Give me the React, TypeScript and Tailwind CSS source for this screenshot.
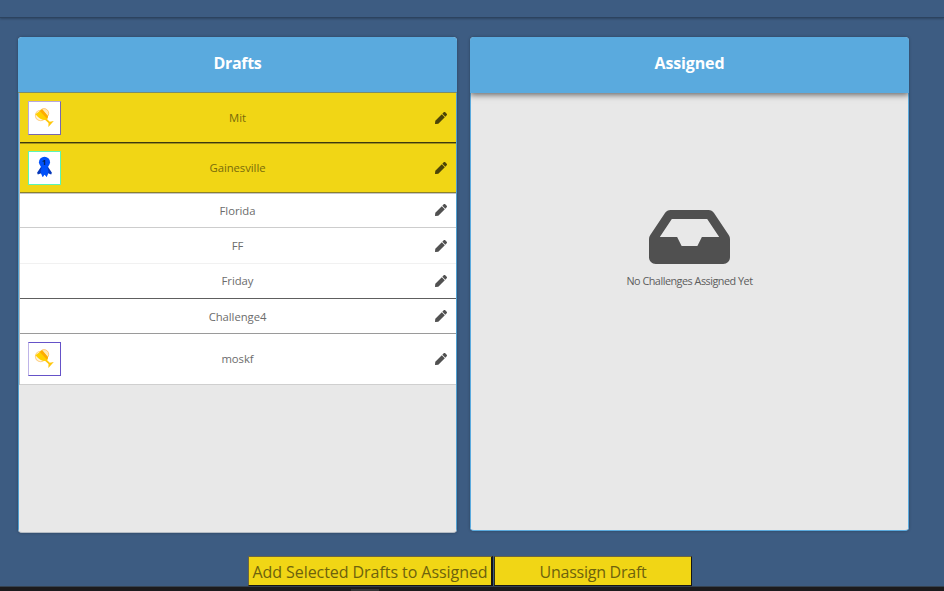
import { FaInbox, FaPen } from "react-icons/fa";

function Goblet() {
  return (
    <svg viewBox="0 0 33 33" className="h-full w-full">
      <circle cx="12.4" cy="13.8" r="5.6" fill="#fff6e0" stroke="#ffd28a" strokeWidth="1.1" />
      <circle cx="16" cy="11.5" r="5" fill="#ffe9b8" stroke="#ffbf66" strokeWidth="0.9" />
      <path d="M6.8 12.4 14 7.2 20.3 14.6Q20 18.4 17.3 18.7 12 18.6 6.8 12.4Z" fill="#ffd000" />
      <path d="M11.5 9 14 7.2 20.3 14.6 19.2 17.2Z" fill="#ffab00" />
      <path d="M17 18.3 18.6 17 22.1 20.4 26.4 19.6 20.6 26.2 20.8 21.9Z" fill="#ffc60a" />
    </svg>
  );
}

function Ribbon() {
  return (
    <svg viewBox="0 0 33 33" className="h-full w-full">
      <path d="M13 15 8.6 21.6 9.4 23.4 13 22 15 26 16.6 20 18.5 26 20.2 22 23.6 23.4 24.4 21.6 20 15Z" fill="#0638ba" />
      <path d="M13.5 15H19.5L20.8 20.5 19 26 16.6 23.6 14.2 26 12.4 20.5Z" fill="#0050fa" />
      <circle cx="16.5" cy="10.4" r="5.9" fill="#0050fa" />
      <text x="16.3" y="13.4" textAnchor="middle" className="fill-[#051b50] font-['Open_Sans',sans-serif] text-[8px] font-bold">1</text>
    </svg>
  );
}

type Draft = { name: string; row: string; pen: string; badge?: "goblet" | "ribbon"; frame?: string };

const drafts: Draft[] = [
  { name: "Mit", row: "h-[50px] bg-[#f1d615] border-[#3d390d] text-[#786b0b]", pen: "text-[#4c4408]", badge: "goblet", frame: "border-[#b7a8df] border-b-[#7868ae] border-r-[#7868ae]" },
  { name: "Gainesville", row: "h-[50px] bg-[#f1d615] border-[#8c812b] text-[#786b0b] shadow-[inset_0_1px_0_#a3931a]", pen: "text-[#4c4408]", badge: "ribbon", frame: "border-[#5cf5b8]" },
  { name: "Florida", row: "h-[35px] bg-white border-[#cdcdcd] text-[#6c6c6c] shadow-[inset_0_1px_0_#c5c5cc]", pen: "text-[#515151]" },
  { name: "FF", row: "h-[36px] bg-white border-[#f1f1f1] text-[#6c6c6c]", pen: "text-[#515151]" },
  { name: "Friday", row: "h-[35px] bg-white border-[#5e5e5e] pb-px text-[#6c6c6c]", pen: "text-[#515151]" },
  { name: "Challenge4", row: "h-[35px] bg-white border-[#9a9a9a] text-[#6c6c6c]", pen: "text-[#515151]" },
  { name: "moskf", row: "h-[51px] bg-white border-[#cfcfcf] pb-px text-[#6c6c6c]", pen: "text-[#515151]", badge: "goblet", frame: "border-[#6552c8] border-l-[#beb4e8]" },
];

function DraftRow({ draft }: { draft: Draft }) {
  return (
    <li className={`grid grid-cols-[33px_1fr_33px] items-center border-b pl-[8px] pr-[9px] ${draft.row}`}>
      <div>
        {draft.badge && (
          <div className={`h-[34px] w-[33px] border bg-white ${draft.frame}`}>
            {draft.badge === "goblet" ? <Goblet /> : <Ribbon />}
          </div>
        )}
      </div>
      <span className="pt-px text-center text-[11.3px] leading-4 tracking-[-0.05px]">{draft.name}</span>
      <FaPen className={`h-3 w-3 justify-self-end ${draft.pen}`} />
    </li>
  );
}

export default function App() {
  return (
    <div className="flex h-[591px] w-[944px] flex-col overflow-hidden bg-[#3d5c82] font-['Open_Sans','Noto_Sans',sans-serif]">
      <header className="h-[18px] shrink-0 border-b border-[#2c435f] shadow-[0_1px_2px_rgba(0,0,0,0.25)]" />
      <main className="flex h-[515px] shrink-0 gap-[13px] pl-[18px] pt-[19px]">
        <section className="h-[496px] w-[439px] overflow-hidden rounded-[4px] border-b border-[#b5bcc4] bg-[#e8e8e8] shadow-[0_0_3px_rgba(0,0,0,0.3)]">
          <h2 className="flex h-[56px] items-center justify-center border-b border-[#7d8d68] bg-[#5aaade] pb-[3px] text-[16px] font-bold tracking-[-0.3px] text-white">Drafts</h2>
          <div className="h-[439px] border-x border-[#509fd0]">
            <ul className="border-l border-[#b9bdbf]">
              {drafts.map((draft) => <DraftRow key={draft.name} draft={draft} />)}
            </ul>
          </div>
        </section>
        <section className="h-[494px] w-[439px] overflow-hidden rounded-[4px] border-b border-[#5aaade] bg-[#e8e8e8] shadow-[0_0_3px_rgba(0,0,0,0.3)]">
          <h2 className="relative flex h-[56px] items-center justify-center bg-[#5aaade] pb-[5px] text-[16px] font-bold tracking-[-0.15px] text-white shadow-[0_2px_6px_rgba(0,0,0,0.55)]">Assigned</h2>
          <div className="flex h-[437px] flex-col items-center border-x-[1.5px] border-[#5aaade] pt-[108px]">
            <FaInbox className="h-[72px] w-[81px] text-[#505050]" />
            <p className="text-[10.8px] leading-4 tracking-[-0.48px] text-[#5c5c5c]">No Challenges Assigned Yet</p>
          </div>
        </section>
      </main>
      <div className="flex h-[53px] shrink-0 gap-px pl-[248px] pt-[23px]">
        <button className="h-[30px] w-[245px] whitespace-nowrap border border-r-2 border-b-[#151515] border-l-[#6c6542] border-r-[#151515] border-t-[#6c6542] bg-[#f1d615] pt-px text-[16px] leading-5 tracking-[-0.06px] text-[#6d620d]">Add Selected Drafts to Assigned</button>
        <button className="h-[30px] w-[198px] whitespace-nowrap border border-b-[#151515] border-l-[#332f12] border-r-[#151515] border-t-[#6c6542] bg-[#f1d615] pt-px text-[16px] leading-5 tracking-[-0.25px] text-[#6d620d]">Unassign Draft</button>
      </div>
      <footer className="flex flex-1 items-end border-t border-[#354250] bg-[#1c1b1d] pl-[351px]">
        <div className="h-[2px] w-[28px] bg-[#353436]" />
      </footer>
    </div>
  );
}
